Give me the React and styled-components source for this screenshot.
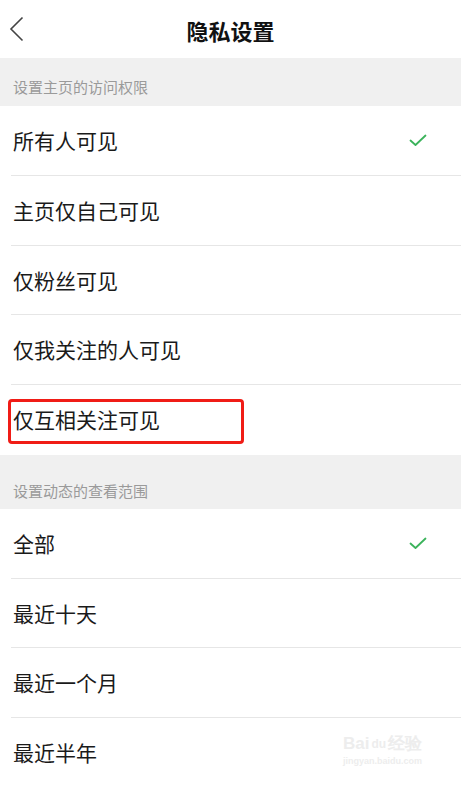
import React from "react";
import styled, { createGlobalStyle } from "styled-components";

const Global = createGlobalStyle`
  html, body { margin: 0; padding: 0; background: #ffffff; }
  body { font-family: "Noto Sans CJK SC", "Noto Sans", sans-serif; }
  * { box-sizing: border-box; }
`;

const Page = styled.div`
  position: relative;
  width: 461px;
  height: 785px;
  overflow: hidden;
  background: #fff;
`;

const Header = styled.header`
  position: relative;
  height: 58px;
  display: flex;
  align-items: center;
  justify-content: center;
  background: #fff;
`;

const Back = styled.div`
  position: absolute;
  left: 9px;
  top: 16px;
  width: 16px;
  height: 26px;
  display: flex;
`;

const Title = styled.h1`
  margin: 0;
  font-size: 22px;
  font-weight: 700;
  color: #111;
  line-height: 1;
  margin-top: 2px;
`;

const SectionLabel = styled.div`
  height: ${(p) => p.$h}px;
  background: #f0f0f0;
  display: flex;
  align-items: flex-end;
  padding: 0 0 ${(p) => p.$pb}px 13px;
  font-size: 15px;
  color: #9a9a9a;
  line-height: 1;
`;

const List = styled.div`
  background: #fff;
`;

const Row = styled.div`
  position: relative;
  height: ${(p) => p.$h || 70}px;
  display: flex;
  align-items: center;
  justify-content: space-between;
  padding: 0 34px 2px 13px;
  font-size: 21px;
  color: #1a1a1a;
  &:not(:last-child)::after {
    content: "";
    position: absolute;
    left: 11px;
    right: 0;
    bottom: 0;
    height: 1px;
    background: #e6e6e6;
  }
`;

const Highlight = styled.div`
  position: absolute;
  left: 8px;
  top: 399px;
  width: 236px;
  height: 45px;
  border: 3px solid #f01c16;
  border-radius: 4px;
  pointer-events: none;
`;

const Watermark = styled.div`
  position: absolute;
  left: 343px;
  top: 732px;
  display: flex;
  flex-direction: column;
  align-items: center;
  color: #ededed;
  font-family: "Liberation Sans", sans-serif;
  pointer-events: none;
`;

const WmTop = styled.div`
  font-size: 17px;
  font-weight: 700;
  display: flex;
  align-items: center;
  gap: 2px;
`;

const WmDu = styled.span`
  font-size: 12px;
`;

const WmBottom = styled.div`
  font-size: 9px;
  font-weight: 700;
  margin-top: 1px;
`;

const Check = () => (
  <svg width="18" height="13" viewBox="0 0 18 13">
    <path d="M1.5 6.5 L6.5 11 L16.5 1.5" fill="none" stroke="#3bb35b" strokeWidth="1.8" strokeLinecap="round" strokeLinejoin="round" />
  </svg>
);

const homeItems = [
  { t: "所有人可见", c: true, h: 70 },
  { t: "主页仅自己可见", h: 70 },
  { t: "仅粉丝可见", h: 69 },
  { t: "仅我关注的人可见", h: 70 },
  { t: "仅互相关注可见", h: 70 },
];

const feedItems = [
  { t: "全部", c: true, h: 70 },
  { t: "最近十天", h: 69 },
  { t: "最近一个月", h: 70 },
  { t: "最近半年", h: 70 },
];

export default function App() {
  return (
    <Page>
      <Global />
      <Header>
        <Back>
          <svg width="16" height="26" viewBox="0 0 16 26">
            <path d="M13.5 1.5 L2 13 L13.5 24.5" fill="none" stroke="#444" strokeWidth="1.6" />
          </svg>
        </Back>
        <Title>隐私设置</Title>
      </Header>
      <SectionLabel $h={48} $pb={12}>设置主页的访问权限</SectionLabel>
      <List>
        {homeItems.map((it) => (
          <Row key={it.t} $h={it.h}>
            <span>{it.t}</span>
            {it.c && <Check />}
          </Row>
        ))}
      </List>
      <SectionLabel $h={54} $pb={11}>设置动态的查看范围</SectionLabel>
      <List>
        {feedItems.map((it) => (
          <Row key={it.t} $h={it.h}>
            <span>{it.t}</span>
            {it.c && <Check />}
          </Row>
        ))}
      </List>
      <Highlight />
      <Watermark>
        <WmTop>Bai<WmDu>du</WmDu>经验</WmTop>
        <WmBottom>jingyan.baidu.com</WmBottom>
      </Watermark>
    </Page>
  );
}
